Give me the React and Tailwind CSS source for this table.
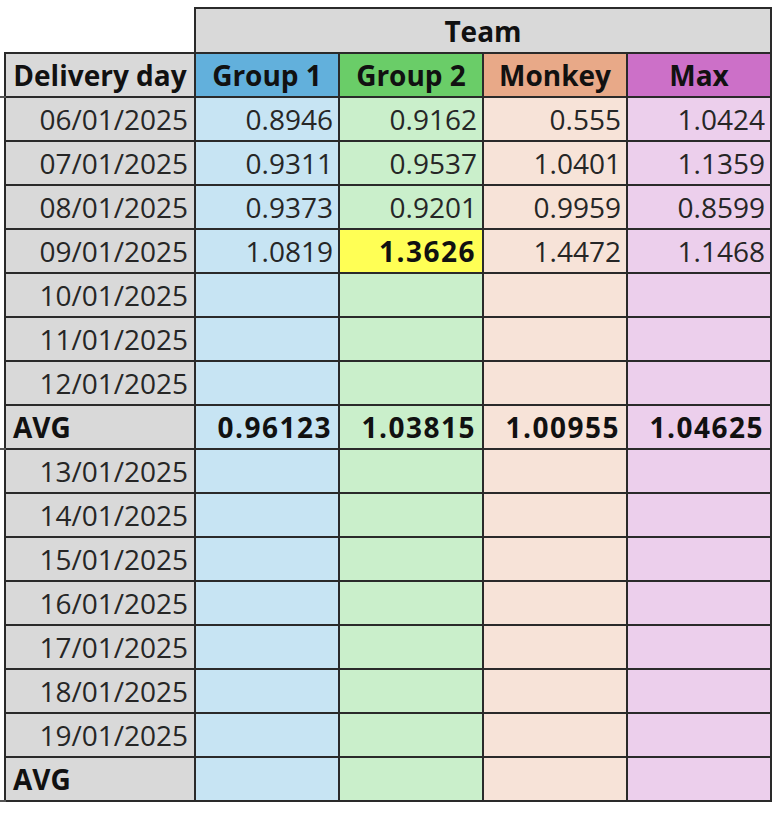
import React from 'react';

const teams = [
  { name: 'Group 1', head: 'bg-[#62b0dc]', cell: 'bg-[#c7e4f3]' },
  { name: 'Group 2', head: 'bg-[#6acd68]', cell: 'bg-[#caefcb]' },
  { name: 'Monkey', head: 'bg-[#e8a988]', cell: 'bg-[#f7e3d8]' },
  { name: 'Max', head: 'bg-[#cc70c8]', cell: 'bg-[#eccfec]' },
];

const rows = [
  { day: '06/01/2025', values: ['0.8946', '0.9162', '0.555', '1.0424'] },
  { day: '07/01/2025', values: ['0.9311', '0.9537', '1.0401', '1.1359'] },
  { day: '08/01/2025', values: ['0.9373', '0.9201', '0.9959', '0.8599'] },
  { day: '09/01/2025', values: ['1.0819', '1.3626', '1.4472', '1.1468'], highlight: 1 },
  { day: '10/01/2025', values: ['', '', '', ''] },
  { day: '11/01/2025', values: ['', '', '', ''] },
  { day: '12/01/2025', values: ['', '', '', ''] },
  { avg: true, values: ['0.96123', '1.03815', '1.00955', '1.04625'] },
  { day: '13/01/2025', values: ['', '', '', ''] },
  { day: '14/01/2025', values: ['', '', '', ''] },
  { day: '15/01/2025', values: ['', '', '', ''] },
  { day: '16/01/2025', values: ['', '', '', ''] },
  { day: '17/01/2025', values: ['', '', '', ''] },
  { day: '18/01/2025', values: ['', '', '', ''] },
  { day: '19/01/2025', values: ['', '', '', ''] },
  { avg: true, values: ['', '', '', ''] },
];

const cellBase = 'border-2 border-[#2a2a2a] p-0 align-middle leading-none';

export default function App() {
  return (
    <div className="w-[778px] h-[813px] bg-white overflow-hidden pt-[7px] font-['Open_Sans',sans-serif] text-[28px] text-[#262626]">
      <table className="table-fixed border-collapse">
        <colgroup>
          <col className="w-[5px]" />
          <col className="w-[190px]" />
          <col className="w-[144px]" />
          <col className="w-[144px]" />
          <col className="w-[144px]" />
          <col className="w-[144px]" />
        </colgroup>
        <tbody>
          {/* team header */}
          <tr className="h-[45px]">
            <td className="p-0" />
            <td className="p-0" />
            <td colSpan={4} className={`${cellBase} bg-[#d9d9d9] text-center font-bold text-[#111]`}>
              Team
            </td>
          </tr>
          <tr className="h-[44px]">
            <td className="p-0 border-b-2 border-[#555]" />
            <td className={`${cellBase} bg-[#d9d9d9] text-center font-bold text-[#111]`}>Delivery day</td>
            {teams.map((t) => (
              <td key={t.name} className={`${cellBase} ${t.head} text-center font-bold text-[#111]`}>
                {t.name}
              </td>
            ))}
          </tr>
          {rows.map((r, i) => (
            <tr key={i} className="h-[44px]">
              <td className={r.avg ? 'p-0 border-b-2 border-[#555]' : 'p-0'} />
              {r.avg ? (
                <td className={`${cellBase} bg-[#d9d9d9] text-left pl-[7px] font-bold text-[#111]`}>AVG</td>
              ) : (
                <td className={`${cellBase} bg-[#d9d9d9] text-right pr-[6px]`}>{r.day}</td>
              )}
              {r.values.map((v, j) => {
                const bold = r.avg || r.highlight === j;
                return (
                  <td
                    key={j}
                    className={`${cellBase} text-right ${
                      r.highlight === j ? 'bg-[#ffff55]' : teams[j].cell
                    } ${bold ? 'font-bold text-[#111] tracking-[1.5px] pr-[6px]' : 'pr-[5px]'}`}
                  >
                    {v}
                  </td>
                );
              })}
            </tr>
          ))}
        </tbody>
      </table>
    </div>
  );
}
